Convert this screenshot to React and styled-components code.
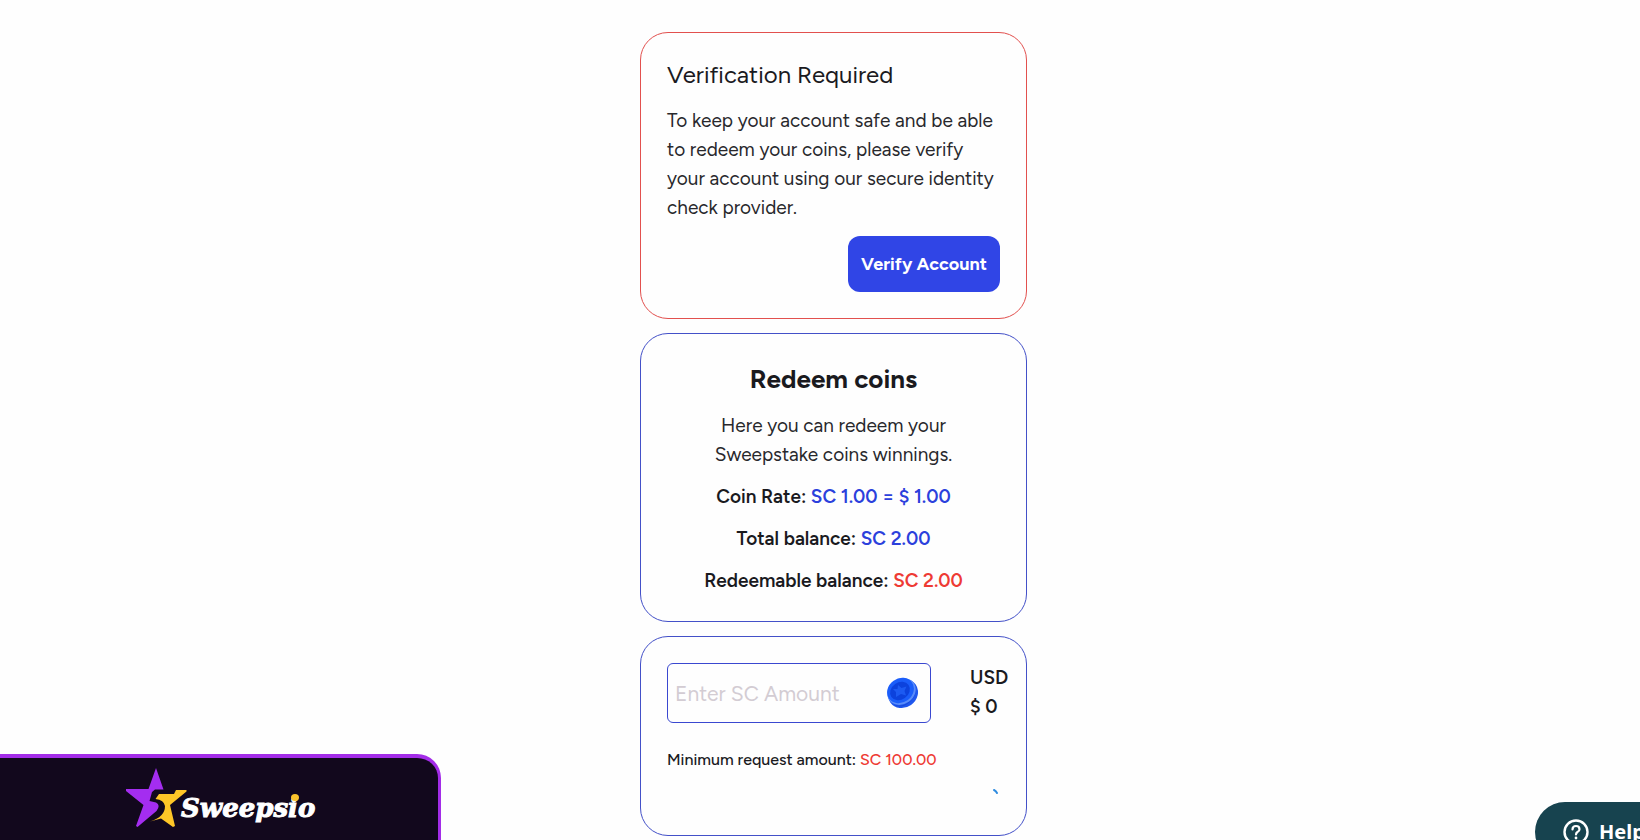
import React from "react";
import styled, { createGlobalStyle } from "styled-components";

const GlobalStyle = createGlobalStyle`
  *, *::before, *::after { box-sizing: border-box; }
  body {
    margin: 0;
    background: #fefefe;
    color: #1a1a1e;
    font-family: Figtree, Lato, "Liberation Sans", sans-serif;
    font-size: 19px;
    line-height: 29px;
    overflow-x: hidden;
  }
  h1, h2, p { margin: 0; }
`;

const Page = styled.main`
  display: flex;
  flex-direction: column;
  align-items: center;
  gap: 14px;
  padding: 32px 0 4px 27px;
`;

const Card = styled.section`
  width: 100%;
  max-width: 387px;
  padding: 26px;
  border: 1px solid ${(p) => (p.$tone === "alert" ? "#e2504e" : "#4350c8")};
  border-radius: 28px;
  display: flex;
  flex-direction: column;
  align-items: ${(p) => (p.$centered ? "center" : "stretch")};
  text-align: ${(p) => (p.$centered ? "center" : "left")};
`;

const Title = styled.h1`
  font-size: 24px;
  line-height: 32px;
  font-weight: 400;
  margin-bottom: 15px;
`;

const Heading = styled.h2`
  font-size: 26px;
  line-height: 38px;
  font-weight: 700;
  margin-bottom: 13px;
`;

const Text = styled.p`
  color: #28282c;
  max-width: ${(p) => (p.$narrow ? "260px" : "none")};
`;

const VerifyButton = styled.button`
  align-self: flex-end;
  width: 152px;
  height: 56px;
  margin-top: 14px;
  padding: 0;
  border: 0;
  border-radius: 12px;
  background: #3045e6;
  color: #fff;
  font: inherit;
  font-size: 18px;
  font-weight: 700;
`;

const Stat = styled.p`
  font-weight: 600;
  margin-top: 13px;
`;

const Value = styled.span`
  color: ${(p) => (p.$tone === "alert" ? "#ee3a34" : "#2b40dc")};
`;

const AmountRow = styled.div`
  display: flex;
  gap: 39px;
  margin-right: -10px;
`;

const Field = styled.label`
  flex: 1;
  min-width: 0;
  display: flex;
  align-items: center;
  height: 60px;
  padding: 0 12px 0 7px;
  border: 1px solid #3a48d0;
  border-radius: 6px;
`;

const AmountInput = styled.input`
  flex: 1;
  min-width: 0;
  padding: 0;
  border: 0;
  outline: 0;
  background: none;
  font: inherit;
  font-size: 21px;
  &::placeholder { color: #d3ccd3; opacity: 1; }
`;

const Converted = styled.output`
  flex: none;
  width: 40px;
  font-weight: 600;
  white-space: pre-line;
`;

const Minimum = styled.p`
  margin-top: 22px;
  font-size: 16px;
  font-weight: 500;
`;

const SpinnerRow = styled.div`
  display: flex;
  justify-content: flex-end;
  height: 35px;
  padding-top: 14px;
`;

const Brand = styled.aside`
  position: fixed;
  left: 0;
  bottom: 0;
  width: 441px;
  height: 86px;
  padding: 10px 0 0 125px;
  display: flex;
  border-top: 4px solid #a32ce8;
  border-right: 3px solid #a32ce8;
  border-top-right-radius: 24px;
  background: #12081d;
`;

const BrandName = styled.span`
  position: relative;
  margin-left: -6px;
  padding-top: 21px;
  color: #fff;
  font: italic 700 26px/38px "DejaVu Serif", serif;
  -webkit-text-stroke: 1px #fff;
`;

const BrandDot = styled.i`
  position: absolute;
  right: 16px;
  top: 26px;
  width: 8px;
  height: 7px;
  border-radius: 50%;
  background: #fcc42c;
`;

const HelpButton = styled.button`
  position: fixed;
  right: -30px;
  bottom: -22px;
  width: 135px;
  height: 60px;
  padding: 0 0 0 28px;
  display: flex;
  align-items: center;
  gap: 10px;
  border: 0;
  border-radius: 30px;
  background: #17434f;
  color: #fff;
  font: 700 20px/28px "Noto Sans", sans-serif;
`;

const Coin = () => (
  <svg width="32" height="32" viewBox="0 0 32 32" aria-hidden="true">
    <ellipse cx="17" cy="16.5" rx="15.5" ry="14" transform="rotate(-35 17 16.5)" fill="#1f57ee" />
    <path d="M5 26Q15 34 25 24Q32 16 29 7Q32 20 20 27Q11 31 5 26Z" fill="#1648d8" />
    <ellipse cx="15.5" cy="14.5" rx="15" ry="12.5" transform="rotate(-35 15.5 14.5)" fill="#5a8dfa" />
    <ellipse cx="14.5" cy="13.5" rx="14" ry="12" transform="rotate(-35 14.5 13.5)" fill="#1a5dfa" />
    <ellipse cx="14" cy="14" rx="10.5" ry="8.5" transform="rotate(-35 14 14)" fill="#0c42dd" />
    <path d="M12 8L15.5 11L20.5 9.5L18.5 14L20 18.5L15 17L10 20L10 15L7 12L11.5 12Z" fill="#1c5af2" />
  </svg>
);

const Star = () => (
  <svg width="62" height="60" viewBox="0 0 62 60" aria-hidden="true">
    <path fill="#a42df0" d="M31 0L38.5 21.5H30L27 24L24.5 33L31 34.5Q36 37 31.5 43L12.5 59L11 58L18.5 37L1 23V21H23.5Z" />
    <path fill="#fec627" d="M34 26H49L51 22H61.5V23.5L45 37L50 58L48 59L36 50.5L25 53.5Q40 49 40 38Q39 32 30.5 31Z" />
  </svg>
);

const Spinner = () => (
  <svg width="8" height="8" viewBox="0 0 8 8" aria-hidden="true">
    <path d="M2 2Q4 3 5 5" fill="none" stroke="#2f8ce0" strokeWidth="2" strokeLinecap="round" />
  </svg>
);

const HelpIcon = () => (
  <svg width="26" height="26" viewBox="0 0 26 26" fill="none" stroke="currentColor" aria-hidden="true">
    <circle cx="13" cy="13" r="11.5" strokeWidth="2.4" />
    <path d="M9.5 10.5Q9.5 7 13 7Q16.5 7 16.5 10.3Q16.5 12 14.5 13Q13 14 13 15.5" strokeWidth="2.2" strokeLinecap="round" />
    <circle cx="13" cy="19" r="1.4" fill="currentColor" stroke="none" />
  </svg>
);

export default function App() {
  return (
    <>
      <GlobalStyle />
      <Page>
        <Card $tone="alert">
          <Title>Verification Required</Title>
          <Text>
            To keep your account safe and be able to redeem your coins, please verify your account
            using our secure identity check provider.
          </Text>
          <VerifyButton type="button">Verify Account</VerifyButton>
        </Card>
        <Card $centered>
          <Heading>Redeem coins</Heading>
          <Text $narrow>Here you can redeem your Sweepstake coins winnings.</Text>
          <Stat>Coin Rate: <Value>SC 1.00 = $ 1.00</Value></Stat>
          <Stat>Total balance: <Value>SC 2.00</Value></Stat>
          <Stat>Redeemable balance: <Value $tone="alert">SC 2.00</Value></Stat>
        </Card>
        <Card>
          <AmountRow>
            <Field>
              <AmountInput aria-label="Enter SC Amount" placeholder="Enter SC Amount" />
              <Coin />
            </Field>
            <Converted>{"USD\n$ 0"}</Converted>
          </AmountRow>
          <Minimum>Minimum request amount: <Value $tone="alert">SC 100.00</Value></Minimum>
          <SpinnerRow><Spinner /></SpinnerRow>
        </Card>
      </Page>
      <Brand>
        <Star />
        <BrandName>Sweepsio<BrandDot /></BrandName>
      </Brand>
      <HelpButton type="button"><HelpIcon />Help</HelpButton>
    </>
  );
}
